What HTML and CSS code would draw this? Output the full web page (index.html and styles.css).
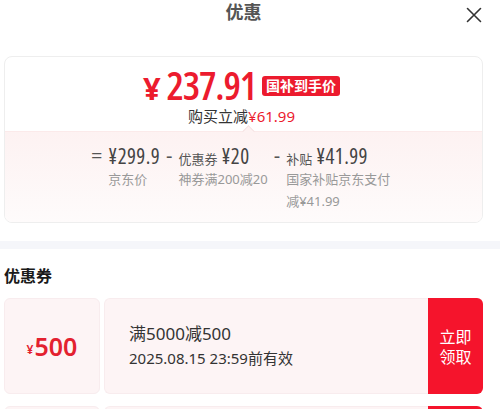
FILE: index.html
```html
<!DOCTYPE html>
<html lang="zh-CN">
<head>
    <meta charset="UTF-8">
    <meta name="viewport" content="width=device-width, initial-scale=1.0">
    <title>优惠</title>
    <link rel="stylesheet" href="styles.css">
</head>
<body>
    <header class="head">
        <span></span>
        <h1 class="title">优惠</h1>
        <svg class="close" width="16" height="16" viewBox="0 0 16 16">
            <path d="M1.5 1.5 L14.5 14.5 M14.5 1.5 L1.5 14.5" stroke="#333" stroke-width="1.6" stroke-linecap="round" fill="none"/>
        </svg>
    </header>

    <div class="wrap">
        <section class="price-card">
            <div class="final">
                <div class="final-row">
                    <span class="price"><small>¥</small>237.91</span>
                    <span class="tag">国补到手价</span>
                </div>
                <div class="cut">购买立减<em>¥61.99</em></div>
            </div>
            <div class="calc">
                <div class="calc-col">
                    <span class="op">=</span>
                    <div>
                        <div class="amt">¥299.9</div>
                        <div class="note">京东价</div>
                    </div>
                </div>
                <div class="calc-col">
                    <span class="op">-</span>
                    <div>
                        <div class="amt"><span class="lbl">优惠券</span>¥20</div>
                        <div class="note">神券满200减20</div>
                    </div>
                </div>
                <div class="calc-col">
                    <span class="op">-</span>
                    <div class="wide">
                        <div class="amt"><span class="lbl">补贴</span>¥41.99</div>
                        <div class="note">国家补贴京东支付减¥41.99</div>
                    </div>
                </div>
            </div>
        </section>
    </div>

    <div class="band"></div>

    <section class="wrap coupons">
        <h2 class="sub-title">优惠券</h2>
        <div class="coupon">
            <div class="stub"><small>¥</small>500</div>
            <div class="body">
                <div class="rule">满5000减500</div>
                <div class="date">2025.08.15 23:59前有效</div>
            </div>
            <button class="take">立即<br>领取</button>
        </div>
        <div class="coupon">
            <div class="stub"><small>¥</small>300</div>
            <div class="body">
                <div class="rule">满3000减300</div>
                <div class="date">2025.08.15 23:59前有效</div>
            </div>
            <button class="take">立即<br>领取</button>
        </div>
    </section>
</body>
</html>
```

FILE: styles.css
```css
body {
    margin: 0;
    font-family: "Noto Sans", "Noto Sans CJK SC", sans-serif;
    color: #333;
    background: #fff;
    overflow: hidden;
}
.head {
    display: grid;
    grid-template-columns: 1fr auto 1fr;
    align-items: center;
    padding: 0 17px 0 4px;
    height: 24px;
    margin-bottom: 32px;
}
.title {
    margin: 0;
    font-size: 18px;
    line-height: 24px;
    color: #555;
    font-weight: bold;
}
.close {
    justify-self: end;
    margin-right: 1px;
    margin-top: 6px;
}
.wrap {
    padding: 0 17px 0 4px;
}
.price-card {
    border: 1px solid #eee;
    border-radius: 8px;
    overflow: hidden;
}
.final {
    text-align: center;
    padding-top: 9px;
    height: 65px;
}
.final-row {
    display: flex;
    justify-content: center;
    align-items: center;
    height: 37px;
    margin-left: -4px;
}
.price {
    font-family: "Open Sans", sans-serif;
    font-stretch: 80%;
    font-size: 39px;
    font-weight: 600;
    color: #ec1b2e;
    letter-spacing: -1.2px;
}
.price small {
    font-stretch: 100%;
    font-weight: 700;
    font-size: 31px;
    margin-right: 7px;
}
.tag {
    background: #ec1b2e;
    color: #fff;
    font-size: 14px;
    font-weight: bold;
    line-height: 20px;
    padding: 0 4px;
    border-radius: 3px;
    margin-left: 6px;
    margin-top: 3px;
}
.cut {
    font-size: 15px;
    line-height: 22px;
    margin-top: 2px;
    margin-left: -4px;
    color: #333;
}
.cut em {
    font-style: normal;
    color: #ec1b2e;
}
.calc {
    position: relative;
    display: flex;
    justify-content: center;
    gap: 6px;
    padding: 12px 0 10px;
    margin-left: -4px;
    background: linear-gradient(#fdf2f2, #fefbfb);
    border-top: 1px solid #fbeaea;
}
.calc::before {
    content: "";
    position: absolute;
    top: -5px;
    left: 243px;
    width: 8px;
    height: 8px;
    background: #fdf2f2;
    border-left: 1px solid #f5e3e3;
    border-top: 1px solid #f5e3e3;
    transform: rotate(45deg);
}
.calc-col {
    display: flex;
    gap: 6px;
}
.op {
    font-size: 20px;
    line-height: 24px;
    height: 24px;
    color: #555;
}
.amt {
    font-family: "Open Sans", "Noto Sans CJK SC", sans-serif;
    font-stretch: 85%;
    font-size: 21px;
    line-height: 24px;
    height: 24px;
    letter-spacing: 0.4px;
    color: #444;
    white-space: nowrap;
}
.lbl {
    font-family: "Noto Sans CJK SC", sans-serif;
    font-stretch: 100%;
    font-size: 13px;
    letter-spacing: 0;
    margin-right: 4px;
    color: #555;
}
.note {
    font-size: 13px;
    line-height: 22px;
    color: #999;
}
.wide {
    width: 106px;
}
.band {
    height: 8px;
    background: #f5f6fa;
    margin-top: 18px;
}
.sub-title {
    margin: 16px 0 11px;
    font-size: 16px;
    line-height: 22px;
    color: #1a1a1a;
}
.coupon {
    display: flex;
    height: 96px;
    margin-bottom: 12px;
}
.stub {
    width: 96px;
    margin-right: 4px;
    display: flex;
    align-items: center;
    justify-content: center;
    background: #fdf4f5;
    border: 1px solid #f8ecee;
    border-radius: 6px;
    box-sizing: border-box;
    color: #e3212f;
    font-size: 25px;
    font-weight: 600;
}
.stub small {
    font-size: 12px;
    margin-top: 6px;
    margin-right: 1px;
}
.body {
    flex: 1;
    display: flex;
    flex-direction: column;
    justify-content: center;
    padding-left: 24px;
    background: #fdf4f5;
    border: 1px solid #f8ecee;
    border-right: none;
    border-radius: 6px 0 0 6px;
    color: #333;
}
.rule {
    font-size: 17px;
    line-height: 24px;
}
.date {
    font-size: 15px;
    line-height: 24px;
}
.take {
    width: 55px;
    border: none;
    border-radius: 0 6px 6px 0;
    background: #f5142c;
    color: #fff;
    font-family: "Noto Sans CJK SC", sans-serif;
    font-size: 16px;
    line-height: 20px;
    padding: 0;
}
```
